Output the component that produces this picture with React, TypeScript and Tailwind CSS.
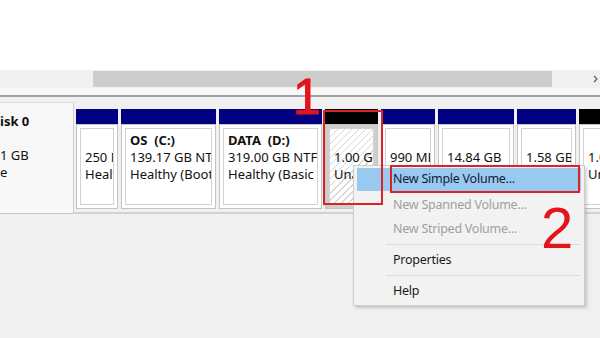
// Disk Management view — disk row, partitions, context menu on unallocated space
type Part = {
  w: string
  head: 'blue' | 'black'
  lines: [string, string, string]
  hatched?: boolean
}

const parts: Part[] = [
  { w: 'w-[42px]', head: 'blue', lines: ['', '250 MB', 'Healthy (EFI System Partition)'] },
  { w: 'w-[95px]', head: 'blue', lines: ['OS  (C:)', '139.17 GB NTFS', 'Healthy (Boot, Page File, Crash Dump)'] },
  { w: 'w-[103px]', head: 'blue', lines: ['DATA  (D:)', '319.00 GB NTFS', 'Healthy (Basic Data Partition)'] },
  { w: 'w-[53px]', head: 'black', lines: ['', '1.00 GB', 'Unallocated'], hatched: true },
  { w: 'w-[54px]', head: 'blue', lines: ['', '990 MB', 'Healthy (Recovery Partition)'] },
  { w: 'w-[76px]', head: 'blue', lines: ['', '14.84 GB', 'Healthy (Recovery Partition)'] },
  { w: 'w-[59px]', head: 'blue', lines: ['', '1.58 GB', 'Healthy (Recovery Partition)'] },
  { w: 'w-[40px]', head: 'black', lines: ['', '1.00 GB', 'Unallocated'] },
]

function Partition({ p }: { p: Part }) {
  return (
    <div className={`flex flex-col shrink-0 h-[100px] ${p.w}`}>
      <div className={`h-[15px] ${p.head === 'blue' ? 'bg-[#000080]' : 'bg-black'}`} />
      <div
        className={`flex-1 p-[3px] border border-[#c4c4c4] ${p.hatched ? 'bg-[#cfcfcf]' : 'bg-white'}`}
      >
        <div
          className={`h-full border border-[#d2d2d2] pl-[4px] pt-[3px] overflow-hidden whitespace-pre leading-[17px] text-[13px] text-[#111] ${
            p.hatched
              ? 'bg-[repeating-linear-gradient(135deg,#d6d6d6_0px,#d6d6d6_1px,#ffffff_1px,#ffffff_5px)]'
              : 'bg-white'
          }`}
        >
          <div className="font-bold h-[17px]">{p.lines[0]}</div>
          <div>{p.lines[1]}</div>
          <div>{p.lines[2]}</div>
        </div>
      </div>
    </div>
  )
}

function MenuItem({ label, disabled, active }: { label: string; disabled?: boolean; active?: boolean }) {
  return (
    <div
      className={`flex items-center pl-[36px] text-[12.5px] tracking-[-0.25px] ${
        active ? 'h-[23px] mx-[3px] bg-[#99c9ef] text-[#141a3c]' : 'h-[24px] mx-[3px]'
      } ${disabled ? 'text-[#a0a0a0]' : active ? '' : 'text-[#1a1a1a]'}`}
    >
      {label}
    </div>
  )
}

function Separator() {
  return (
    <div className="h-[7px] flex items-center pl-[32px] pr-[4px]">
      <div className="h-px w-full bg-[#dadada]" />
    </div>
  )
}

export default function App() {
  return (
    <div className="relative w-[600px] h-[338px] overflow-hidden bg-[#f0f0f0] font-['Noto_Sans',sans-serif]">
      {/* blank list area */}
      <div className="h-[70px] bg-white" />

      {/* horizontal scrollbar */}
      <div className="h-[18px] bg-[#f0f0f0] flex items-center">
        <div className="ml-[93px] w-[459px] h-[16px] bg-[#cdcdcd]" />
        <div className="flex-1 flex justify-end pr-[2px]">
          <svg width="5" height="8" viewBox="0 0 5 8">
            <path d="M1 1 L4 4 L1 7" fill="none" stroke="#606060" strokeWidth="1.2" />
          </svg>
        </div>
      </div>
      <div className="h-[7px] bg-[#f8f8f8]" />
      <div className="h-[2px] bg-[#a3a3a3]" />

      {/* disk row */}
      <div className="flex mt-[5px]">
        <div className="w-[74px] h-[112px] shrink-0 bg-[#f8f8f8] border-t border-[#e2e2e2] border-r border-b border-r-[#cfcfcf] border-b-[#c8c8c8] pt-[10px] leading-[17px] text-[13px] text-[#111] whitespace-nowrap">
          <div className="font-bold">isk 0</div>
          <div className="h-[17px]" />
          <div>1 GB</div>
          <div>e</div>
        </div>
        <div className="flex-1 h-[112px] pt-[7px] pl-[2px] border-b-2 border-[#d2d2d2] flex gap-[3px] overflow-hidden">
          {parts.map((p, i) => (
            <Partition key={i} p={p} />
          ))}
        </div>
      </div>

      {/* context menu */}
      <div className="absolute left-[353px] top-[165px] w-[232px] h-[141px] bg-[#f2f2f2] border border-[#cccccc] shadow-[2px_2px_3px_rgba(0,0,0,0.18)] pt-[2px]">
        <MenuItem label="New Simple Volume..." active />
        <div className="h-[2px]" />
        <MenuItem label="New Spanned Volume..." disabled />
        <MenuItem label="New Striped Volume..." disabled />
        <Separator />
        <MenuItem label="Properties" />
        <Separator />
        <MenuItem label="Help" />
      </div>

      {/* annotations */}
      <div className="absolute left-[323px] top-[110px] w-[60px] h-[95px] border-2 border-[#d8232a]" />
      <div className="absolute left-[390px] top-[165px] w-[190px] h-[28px] border-2 border-[#d8232a]" />
      <div className="absolute left-[293px] top-[72px] text-[50px] leading-none text-[#e3141c] font-['Liberation_Sans',sans-serif] [-webkit-text-stroke:1px_#e3141c]">
        1
      </div>
      <div className="absolute left-[541px] top-[199px] text-[58px] leading-none text-[#e3141c] font-['Liberation_Sans',sans-serif]">
        2
      </div>
    </div>
  )
}
